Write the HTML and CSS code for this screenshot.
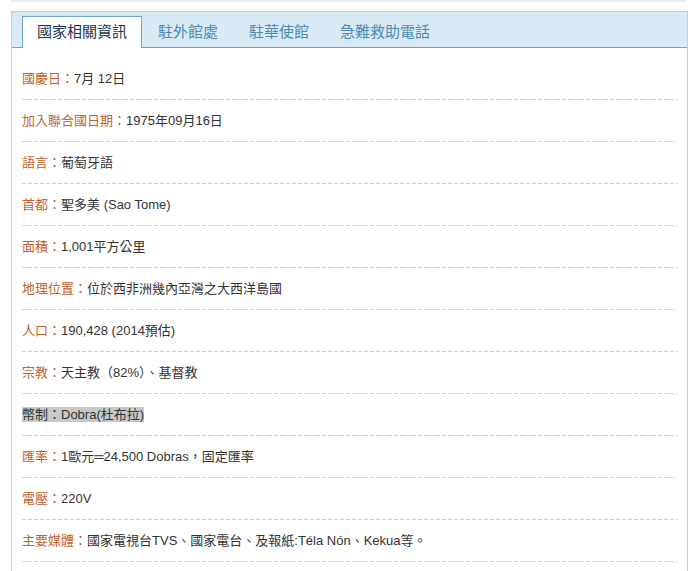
FILE: index.html
```html
<!DOCTYPE html>
<html lang="zh-Hant">
<head>
<meta charset="utf-8">
<title>國家相關資訊</title>
<link rel="stylesheet" href="styles.css">
</head>
<body>
<div class="topline"></div>
<div class="panel">
  <div class="tabbar">
    <ul class="tabs">
      <li class="tab active">國家相關資訊</li>
      <li class="tab">駐外館處</li>
      <li class="tab">駐華使館</li>
      <li class="tab">急難救助電話</li>
    </ul>
  </div>
  <ul class="rows">
    <li class="row"><span class="label">國慶日：</span>7月 12日</li>
    <li class="row"><span class="label">加入聯合國日期：</span>1975年09月16日</li>
    <li class="row"><span class="label">語言：</span>葡萄牙語</li>
    <li class="row"><span class="label">首都：</span>聖多美 (Sao Tome)</li>
    <li class="row"><span class="label">面積：</span>1,001平方公里</li>
    <li class="row"><span class="label">地理位置：</span>位於西非洲幾內亞灣之大西洋島國</li>
    <li class="row"><span class="label">人口：</span>190,428 (2014預估)</li>
    <li class="row"><span class="label">宗教：</span>天主教（82%）、基督教</li>
    <li class="row"><span class="selected">幣制：Dobra(杜布拉)</span></li>
    <li class="row"><span class="label">匯率：</span>1歐元═24,500 Dobras，固定匯率</li>
    <li class="row"><span class="label">電壓：</span>220V</li>
    <li class="row"><span class="label">主要媒體：</span>國家電視台TVS、國家電台、及報紙:Téla Nón、Kekua等。</li>
  </ul>
</div>
</body>
</html>
```
FILE: styles.css
```css
html, body {
  margin: 0;
  padding: 0;
  background: #ffffff;
}
body {
  font-family: "Liberation Sans", Arial, "Noto Sans CJK TC", sans-serif;
  color: #333333;
  overflow: hidden;
  height: 571px;
}
.topline {
  height: 2px;
  margin: 0 8px 0 11px;
  background: #e3eef6;
}
.panel {
  margin: 9px 6px 0 11px;
  border: 1px solid #cccccc;
  border-bottom: none;
  height: 560px;
  box-sizing: border-box;
  overflow: hidden;
}
.tabbar {
  background: #d9eaf4;
  border-bottom: 1px solid #6fa6c8;
  height: 35px;
}
.tabs {
  list-style: none;
  margin: 0;
  padding: 4px 0 0 10px;
  display: flex;
}
.tab {
  height: 31px;
  line-height: 30px;
  padding: 0 14px;
  margin-right: 1px;
  border: 1px solid #d6e8f3;
  border-bottom: none;
  font-size: 15px;
  color: #4d8bb3;
  box-sizing: border-box;
}
.tab.active {
  height: 32px;
  background: #ffffff;
  border-color: #73a5c6;
  color: #1c3450;
}
.rows {
  list-style: none;
  margin: 0;
  padding: 10px 10px 0 10px;
}
.row {
  font-size: 13px;
  line-height: 17px;
  height: 17px;
  padding: 12px 0 13px;
  background-image: repeating-linear-gradient(to right, #cfcfcf 0 4px, transparent 4px 6px);
  background-size: 100% 1px;
  background-repeat: no-repeat;
  background-position: left bottom;
}
.label {
  color: #c1622c;
}
.selected {
  background: #c8c8c8;
  color: #333333;
}
```
